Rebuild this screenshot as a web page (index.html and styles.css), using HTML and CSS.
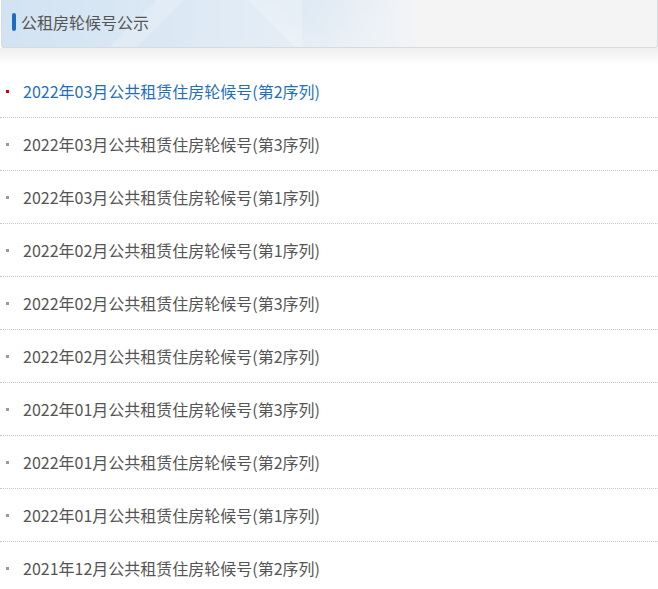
FILE: index.html
```
<!doctype html>
<html>
  <head>
    <meta charset="utf-8">
    <title>公租房轮候号公示</title>
    <link rel="stylesheet" href="styles.css">
  </head>
  <body>
    <div class="panel">
      <div class="panel-head">
        <span class="head-mark"></span>
        <span class="head-title">公租房轮候号公示</span>
      </div>
      <div class="panel-shadow"></div>

      <ul class="news-list">
        <li class="active"><a href="#">2022年03月公共租赁住房轮候号(第2序列)</a></li>
        <li><a href="#">2022年03月公共租赁住房轮候号(第3序列)</a></li>
        <li><a href="#">2022年03月公共租赁住房轮候号(第1序列)</a></li>
        <li><a href="#">2022年02月公共租赁住房轮候号(第1序列)</a></li>
        <li><a href="#">2022年02月公共租赁住房轮候号(第3序列)</a></li>
        <li><a href="#">2022年02月公共租赁住房轮候号(第2序列)</a></li>
        <li><a href="#">2022年01月公共租赁住房轮候号(第3序列)</a></li>
        <li><a href="#">2022年01月公共租赁住房轮候号(第2序列)</a></li>
        <li><a href="#">2022年01月公共租赁住房轮候号(第1序列)</a></li>
        <li><a href="#">2021年12月公共租赁住房轮候号(第2序列)</a></li>
      </ul>
    </div>
  </body>
</html>
```
FILE: styles.css
```
body {
  margin: 0;
  padding: 0;
  background: #fff;
  font-family: "Microsoft YaHei", "Noto Sans CJK SC", sans-serif;
  color: #555;
}

.panel {
  width: 100%;
}

.panel-head {
  height: 44px;
  padding-bottom: 3px;
  display: flex;
  align-items: center;
  padding-left: 10px;
  margin-left: 1px;
  border: 1px solid #d6dbe0;
  border-top: none;
  border-radius: 0 0 3px 3px;
  background:
    linear-gradient(135deg, rgba(255,255,255,0) 50%, rgba(255,255,255,.18) 50%, rgba(255,255,255,.18) 62%, rgba(255,255,255,0) 62%) 40px 0 / 180px 48px no-repeat,
    linear-gradient(45deg, rgba(255,255,255,0) 55%, rgba(255,255,255,.2) 55%, rgba(255,255,255,0) 75%) 180px 0 / 160px 48px no-repeat,
    linear-gradient(135deg, rgba(205,224,240,.35) 0, rgba(255,255,255,0) 60%) 300px 0 / 120px 48px no-repeat,
    linear-gradient(to right, #d2e3f2 0, #dbe8f4 25%, #e6eef6 45%, #eef2f6 58%, #f4f4f4 64%, #f4f4f4 100%);
}

.head-mark {
  width: 4px;
  height: 18px;
  border-radius: 2px;
  background: #1f6fc0;
  margin-right: 5px;
}

.head-title {
  font-size: 16px;
  color: #555;
  line-height: 20px;
}

.panel-shadow {
  height: 17px;
  background: linear-gradient(to bottom, #efefef, #fff);
}

.news-list {
  list-style: none;
  margin: 0;
  padding: 0;
}

.news-list li {
  position: relative;
  height: 52px;
  line-height: 52px;
  padding-left: 23px;
  border-bottom: 1px dotted #c8c8c8;
  font-size: 16px;
}

.news-list li::before {
  content: "";
  position: absolute;
  left: 6px;
  top: 25px;
  width: 3px;
  height: 3px;
  background: #999;
}

.news-list li a {
  color: #555;
  text-decoration: none;
}

.news-list li.active::before {
  background: #c00;
}

.news-list li.active a {
  color: #1f6fc0;
}
```
